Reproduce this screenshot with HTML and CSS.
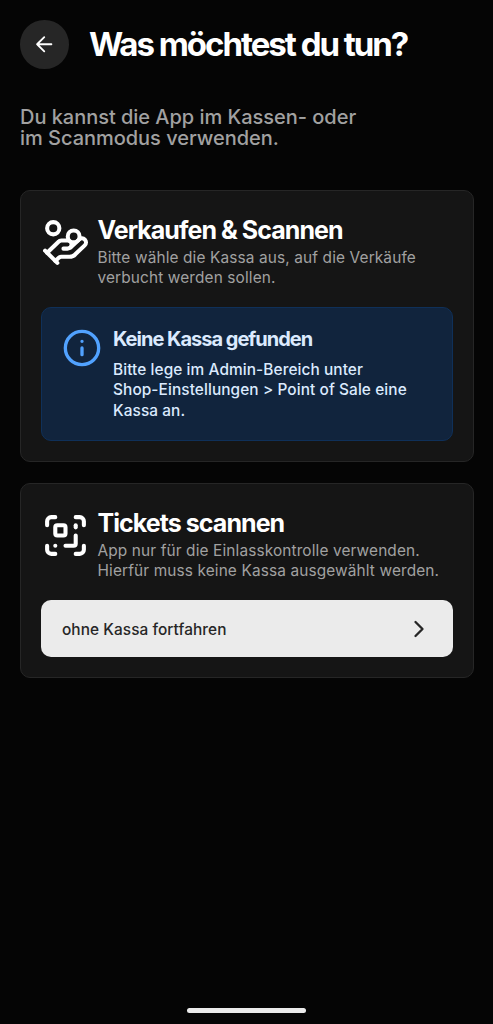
FILE: index.html
```html
<!DOCTYPE html>
<html lang="de">
<head>
<meta charset="utf-8">
<title>Was möchtest du tun?</title>
<link rel="stylesheet" href="styles.css">
</head>
<body>
<header class="header">
  <button class="back" aria-label="Zurück"><svg class="icon back-icon" viewBox="0 0 24 24"><path d="m12 19-7-7 7-7M19 12H5"/></svg></button>
  <h1 class="title">Was möchtest du tun?</h1>
</header>
<main class="main">
  <p class="intro">Du kannst die App im Kassen- oder<br>im Scanmodus verwenden.</p>
  <section class="card">
    <div class="card-head">
      <svg class="icon card-icon" viewBox="0 0 24 24"><path d="M11 15h2a2 2 0 1 0 0-4h-3c-.6 0-1.1.2-1.4.6L3 17"/><path d="m7 21 1.6-1.4c.3-.4.8-.6 1.4-.6h4c1.1 0 2.1-.4 2.8-1.2l4.6-4.4a2 2 0 0 0-2.75-2.91l-4.2 3.9"/><path d="m2 16 6 6"/><circle cx="16" cy="9" r="2.9"/><circle cx="6" cy="5" r="3"/></svg>
      <div class="card-copy">
        <h2 class="card-title">Verkaufen &amp; Scannen</h2>
        <p class="card-text">Bitte wähle die Kassa aus, auf die Verkäufe<br>verbucht werden sollen.</p>
      </div>
    </div>
    <div class="notice">
      <svg class="icon notice-icon" viewBox="0 0 24 24"><circle cx="12" cy="12" r="10"/><path d="M12 16v-4M12 8h.01"/></svg>
      <div>
        <h3 class="notice-title">Keine Kassa gefunden</h3>
        <p class="notice-text">Bitte lege im Admin-Bereich unter<br>Shop-Einstellungen &gt; Point of Sale eine<br>Kassa an.</p>
      </div>
    </div>
  </section>
  <section class="card">
    <div class="card-head">
      <svg class="icon card-icon" viewBox="0 0 24 24"><path d="M17 12v4a1 1 0 0 1-1 1h-4"/><path d="M17 3h2a2 2 0 0 1 2 2v2"/><path d="M17 8V7"/><path d="M21 17v2a2 2 0 0 1-2 2h-2"/><path d="M3 7V5a2 2 0 0 1 2-2h2"/><path d="M7 17h.01"/><path d="M7 21H5a2 2 0 0 1-2-2v-2"/><rect x="7" y="7" width="5" height="5" rx="1"/></svg>
      <div class="card-copy">
        <h2 class="card-title">Tickets scannen</h2>
        <p class="card-text">App nur für die Einlasskontrolle verwenden.<br>Hierfür muss keine Kassa ausgewählt werden.</p>
      </div>
    </div>
    <button class="continue">ohne Kassa fortfahren<svg class="icon continue-icon" viewBox="0 0 24 24"><path d="m9 18 6-6-6-6"/></svg></button>
  </section>
</main>
<div class="home-bar"></div>
</body>
</html>
```
FILE: styles.css
```css
* { box-sizing: border-box; }
body {
  margin: 0;
  height: 1024px;
  display: flex;
  flex-direction: column;
  background: #050505;
  color: #fff;
  font-family: Inter, "Liberation Sans", sans-serif;
  font-weight: 400;
}
h1, h2, h3, p { margin: 0; }
button { border: 0; font: inherit; }
.icon {
  flex: none;
  fill: none;
  stroke: currentColor;
  stroke-width: 2;
  stroke-linecap: round;
  stroke-linejoin: round;
}
.header { display: flex; align-items: center; gap: 20.5px; padding: 20px 20px 0; }
.back {
  display: grid;
  place-items: center;
  width: 48.5px;
  height: 48.5px;
  padding: 0;
  border-radius: 50%;
  background: #262626;
  color: #fff;
}
.back-icon { width: 24.5px; height: 24.5px; stroke-width: 1.8; }
.title { font-size: 33px; line-height: 40px; font-weight: 700; letter-spacing: -2.02px; white-space: nowrap; }
.main { flex: 1; display: flex; flex-direction: column; gap: 20.5px; padding: 38px 19.5px 0 20px; }
.intro { margin-bottom: 20.5px; color: #a1a1a1; font-size: 20px; line-height: 21px; font-weight: 500; letter-spacing: -0.03px; }
.card {
  padding: 20px;
  border: 1px solid #262626;
  border-radius: 10px;
  background: #151515;
}
.card-head { display: flex; gap: 7.5px; height: 76.5px; }
.card-icon { width: 49px; height: 49px; margin-top: 7.5px; }
.card-copy { padding-top: 5px; }
.card-title { font-size: 25px; line-height: 28px; font-weight: 700; letter-spacing: -0.95px; }
.card-text { margin-top: 4px; color: #a1a1a1; font-size: 15.4px; line-height: 20px; letter-spacing: 0.13px; white-space: nowrap; }
.notice {
  display: flex;
  gap: 11px;
  height: 134px;
  margin-top: 20px;
  padding: 20px;
  border: 1px solid #0f3059;
  border-radius: 10px;
  background: #11243d;
  color: #dbeafe;
}
.notice-icon { width: 40px; height: 40px; color: #51a2ff; }
.notice-title { font-size: 20px; line-height: 22px; font-weight: 700; letter-spacing: -1px; }
.notice-text { margin-top: 9.5px; font-size: 15.4px; line-height: 20.5px; font-weight: 500; letter-spacing: 0.09px; white-space: nowrap; }
.continue {
  display: flex;
  align-items: center;
  justify-content: space-between;
  width: 100%;
  height: 57px;
  margin-top: 20px;
  padding: 1px 20px 0 21px;
  border-radius: 10px;
  background: #ebebeb;
  color: #262626;
  font-size: 15.4px;
  font-weight: 500;
  letter-spacing: 0.07px;
}
.continue-icon { width: 28px; height: 28px; }
.home-bar { width: 119px; height: 5px; margin: 0 auto 11px; border-radius: 3px; background: #ebebeb; }
```
